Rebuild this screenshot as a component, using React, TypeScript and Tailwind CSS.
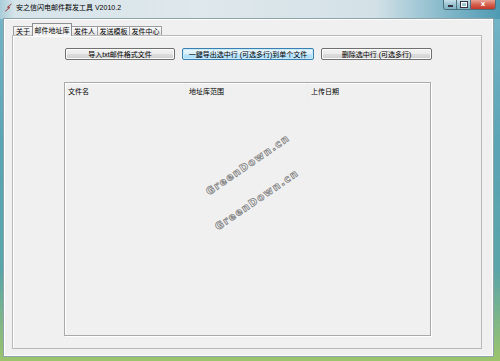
import React from "react";

const F = "font-['Liberation_Sans','Noto_Sans_CJK_SC',sans-serif]";

function Tab({ label, w, selected }: { label: string; w: string; selected?: boolean }) {
  if (selected) {
    return (
      <div
        className={`${w} h-[13px] -mb-[1px] relative z-10 flex items-center justify-center border border-b-0 border-[#8c8e94] bg-[#f3f3f3] rounded-t-[1px] text-[7px] leading-none text-black`}
      >
        {label}
      </div>
    );
  }
  return (
    <div
      className={`${w} h-[9px] flex items-center justify-center border border-b-0 border-[#9a9ca2] bg-[linear-gradient(#fbfbfb,#e3e3e3)] rounded-t-[1px] text-[7px] leading-none text-black -ml-[1px] first:ml-0`}
    >
      {label}
    </div>
  );
}

function Btn({ label, w, focused }: { label: string; w: string; focused?: boolean }) {
  return (
    <div
      className={`${w} h-[12px] flex items-center justify-center rounded-[2px] border text-[7px] leading-none text-black ${
        focused
          ? "border-[#3c7fb1] bg-[linear-gradient(#eaf6fd_0%,#d9f0fc_50%,#bee6fd_51%,#a7d9f5_100%)] shadow-[inset_0_0_0_1px_#c9ecfd]"
          : "border-[#707070] bg-[linear-gradient(#f2f2f2_0%,#ebebeb_50%,#dddddd_51%,#cfcfcf_100%)] shadow-[inset_0_0_0_1px_#fcfcfc]"
      }`}
    >
      {label}
    </div>
  );
}

function Watermark({ left, top }: { left: string; top: string }) {
  return (
    <div
      className={`absolute ${left} ${top} -translate-x-1/2 -translate-y-1/2 -rotate-[34.5deg] whitespace-nowrap font-['DejaVu_Sans',sans-serif] font-bold text-[10px] leading-none tracking-[1.4px] text-white [-webkit-text-stroke:0.9px_#8a8a8a]`}
    >
      GreenDown.cn
    </div>
  );
}

export default function App() {
  return (
    <div
      className={`${F} w-[500px] h-[361px] overflow-hidden flex flex-col bg-[linear-gradient(180deg,#77b6c8_0%,#5aa4b6_40%,#5aa5a9_75%,#9cc46c_100%)]`}
    >
      {/* Title bar */}
      <div className="h-[19px] flex items-start bg-[linear-gradient(90deg,#a9cdd9_0%,#d6e4ea_3%,#dfe8ec_40%,#d3e1e7_75%,#7fb6c8_90%,#4e9ab2_100%)]">
        <div className="flex items-center h-[15px] pl-[4px] gap-[3px]">
          <svg width="9" height="9" viewBox="0 0 9 9">
            <path d="M7.5 0.8 L3.2 4.2 L5 4.6 L1.2 8.4 L6 4.5 L4.3 4.1 Z" fill="#d2363b" stroke="#8a1c20" strokeWidth="0.4" />
          </svg>
          <span className="text-[7px] leading-none text-black">安之信闪电邮件群发工具 V2010.2</span>
        </div>
        <div className="flex-1" />
        <div className="flex mr-[4px] h-[10px] rounded-b-[3px] border border-t-0 border-[#4d6f7e] overflow-hidden">
          <div className="w-[13px] h-full flex items-end justify-center pb-[2px] bg-[linear-gradient(#c6dfe8,#9cc5d3_50%,#7db2c4)] border-r border-[#4d6f7e]">
            <div className="w-[5px] h-[2px] bg-white border-[0.5px] border-[#334]" />
          </div>
          <div className="w-[14px] h-full flex items-center justify-center bg-[linear-gradient(#c6dfe8,#9cc5d3_50%,#7db2c4)] border-r border-[#4d6f7e]">
            <div className="w-[6px] h-[5px] border-[1px] border-white outline outline-[0.5px] outline-[#334]" />
          </div>
          <div className="w-[24px] h-full flex items-center justify-center bg-[linear-gradient(#e9a396,#d4624f_50%,#c3382a)]">
            <span className="text-white font-['DejaVu_Sans',sans-serif] font-bold text-[7px] leading-none">x</span>
          </div>
        </div>
      </div>

      {/* Client area */}
      <div className="flex-1 ml-[4px] mr-[7px] mb-[5px] bg-[#f0f0f0] border border-[#ffffff] shadow-[0_0_0_1px_#8da3a8] flex flex-col pl-[7px] pr-[10px] pb-[6px] pt-[1px]">
        {/* Tabs */}
        <div className="flex items-end pl-[1px] h-[14px]">
          <Tab label="关于" w="w-[20px]" />
          <Tab label="邮件地址库" w="w-[40px] -ml-[1px]" selected />
          <Tab label="发件人" w="w-[27px]" />
          <Tab label="发送模板" w="w-[33px]" />
          <Tab label="发件中心" w="w-[33px]" />
        </div>
        {/* Panel */}
        <div className="flex-1 border border-[#b9b9b9] bg-[#f0f0f0] shadow-[inset_1px_1px_0_#ffffff] flex flex-col pl-[51px] pt-[12px] pb-[12px]">
          <div className="flex gap-[7px] ml-[1px]">
            <Btn label="导入txt邮件格式文件" w="w-[110px]" />
            <Btn label="一鍵导出选中行 (可选多行)到单个文件" w="w-[132px]" focused />
            <Btn label="删除选中行 (可选多行)" w="w-[111px]" />
          </div>
          <div className="mt-[22px] w-[367px] flex-1 relative border border-[#a9a9a9] shadow-[inset_1px_1px_0_#ffffff,1px_1px_0_#ffffff] bg-[#f0f0f0]">
            <div className="flex h-[16px] items-center text-[7px] leading-none text-black">
              <div className="w-[121px] pl-[3px] h-full flex items-center border-r border-[#ececec]">文件名</div>
              <div className="w-[122px] pl-[3px] h-full flex items-center border-r border-[#ececec]">地址库范围</div>
              <div className="pl-[3px]">上传日期</div>
            </div>
            <Watermark left="left-[183px]" top="top-[82px]" />
            <Watermark left="left-[192px]" top="top-[117px]" />
          </div>
        </div>
      </div>
    </div>
  );
}
